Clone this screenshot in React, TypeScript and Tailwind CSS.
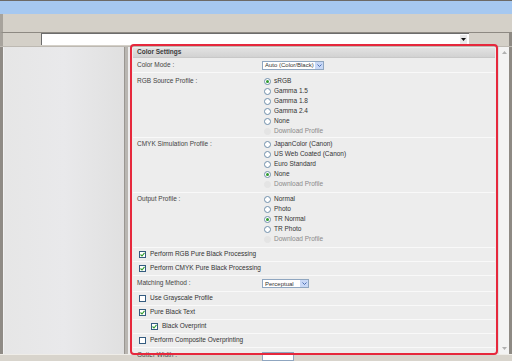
import React from "react";

const font = { fontFamily: '"Liberation Sans", Arial, sans-serif' };

const Radio = ({ label, checked = false, disabled = false }: { label: string; checked?: boolean; disabled?: boolean }) => (
  <div className="flex items-center h-[10px]">
    <span
      className={`w-[7px] h-[7px] rounded-full flex items-center justify-center ${
        disabled ? "bg-[#e4e4e4] border border-[#e4e4e4]" : "bg-white border border-[#6f8fab]"
      }`}
    >
      {checked && <span className="w-[3px] h-[3px] rounded-full bg-[#2f9a2f]" />}
    </span>
    <span className={`ml-[3px] ${disabled ? "text-[#8a8a8a]" : "text-[#333]"}`}>{label}</span>
  </div>
);

const Check = ({ checked }: { checked: boolean }) => (
  <span className="w-[7px] h-[7px] bg-white border border-[#345c80] flex items-center justify-center">
    {checked && (
      <svg width="5" height="5" viewBox="0 0 5 5">
        <path d="M0.5 2.5 L2 4 L4.5 0.8" stroke="#2f9a2f" strokeWidth="1.1" fill="none" />
      </svg>
    )}
  </span>
);

const Select = ({ value, width }: { value: string; width: string }) => (
  <div className={`${width} h-[9px] bg-white border border-[#8fa6c0] flex items-center justify-between overflow-hidden`}>
    <span className="pl-[2px] text-[6px] text-[#333] leading-none whitespace-nowrap">{value}</span>
    <span className="w-[8px] h-[7px] shrink-0 bg-[#c8d8f6] flex items-center justify-center">
      <svg width="5" height="3" viewBox="0 0 5 3">
        <path d="M0.5 0.5 L2.5 2.5 L4.5 0.5" stroke="#4d6fb3" strokeWidth="1" fill="none" />
      </svg>
    </span>
  </div>
);

const RadioRow = ({ label, items, top }: { label: string; items: { t: string; c?: boolean; d?: boolean }[]; top: string }) => (
  <div className={`flex border-b border-[#f9f9f9] ${top}`}>
    <div className="w-[129px] pl-[4px] h-[10px] flex items-center text-[#444]">{label}</div>
    <div className="pl-[2px]">
      {items.map((i) => (
        <Radio key={i.t} label={i.t} checked={i.c} disabled={i.d} />
      ))}
    </div>
  </div>
);

const CheckRow = ({ label, checked, indent = false }: { label: string; checked: boolean; indent?: boolean }) => (
  <div className={`flex items-center h-[14px] border-b border-[#f9f9f9] ${indent ? "pl-[18px]" : "pl-[6px]"}`}>
    <Check checked={checked} />
    <span className="ml-[4px] text-[#333]">{label}</span>
  </div>
);

export default function App() {
  return (
    <div className="relative w-[512px] h-[361px] overflow-hidden bg-[#d4d0c8] text-[6.5px] leading-none" style={font}>
      {/* window title strip */}
      <div className="h-[14px] bg-[#a6c8f0] border-t border-[#6d6a66]" />
      {/* toolbar */}
      <div className="h-[19px] bg-[#d4d0c8] border-l-[3px] border-[#a7a39c] border-b border-b-[#8d8982]" />
      {/* address row */}
      <div className="flex h-[13px] border-l-[3px] border-[#a7a39c]">
        <div className="w-[38px]" />
        <div className="w-[428px] h-[12px] bg-white border-t border-l border-[#6c6c6c] flex justify-end items-center pr-[2px]">
          <span className="w-[7px] h-[9px] bg-[#e8e8e8] flex items-center justify-center">
            <svg width="5" height="3" viewBox="0 0 5 3">
              <path d="M0 0 H5 L2.5 3 Z" fill="#111" />
            </svg>
          </span>
        </div>
        <div className="flex-1 border-r-[3px] border-[#8e8a84]" />
      </div>

      {/* content */}
      <div className="flex h-[308px] border-t border-[#bdb9b2]">
        <div className="w-[3px] bg-[#8f8b85]" />
        <div className="w-[121px] bg-gradient-to-r from-[#e6e6e6] via-[#e9e9eb] to-[#e0e0e0] border-l border-[#f2f2f2]" />
        <div className="w-[4px] bg-[#b9b6b1] border-l border-[#9a9691]" />
        <div className="w-[370px] bg-[#ededed] pl-[5px] pr-[3px]">
          <div className="h-[10px] mt-[1px] bg-gradient-to-b from-[#e2e2e2] to-[#d2d2d2] border-b border-[#c8c8c8] pl-[4px] flex items-center font-bold text-[#3a3a3a]">
            Color Settings
          </div>
          <div className="flex items-center h-[15px] border-b border-[#f9f9f9]">
            <div className="w-[129px] pl-[4px] text-[#444]">Color Mode :</div>
            <Select value="Auto (Color/Black)" width="w-[62px]" />
          </div>
          <RadioRow
            top="pt-[3px] pb-[1px]"
            label="RGB Source Profile :"
            items={[
              { t: "sRGB", c: true },
              { t: "Gamma 1.5" },
              { t: "Gamma 1.8" },
              { t: "Gamma 2.4" },
              { t: "None" },
              { t: "Download Profile", d: true },
            ]}
          />
          <RadioRow
            top="pt-[1px] pb-[3px]"
            label="CMYK Simulation Profile :"
            items={[
              { t: "JapanColor (Canon)" },
              { t: "US Web Coated (Canon)" },
              { t: "Euro Standard" },
              { t: "None", c: true },
              { t: "Download Profile", d: true },
            ]}
          />
          <RadioRow
            top="pt-[1px] pb-[3px]"
            label="Output Profile :"
            items={[
              { t: "Normal" },
              { t: "Photo" },
              { t: "TR Normal", c: true },
              { t: "TR Photo" },
              { t: "Download Profile", d: true },
            ]}
          />
          <CheckRow label="Perform RGB Pure Black Processing" checked />
          <CheckRow label="Perform CMYK Pure Black Processing" checked />
          <div className="flex items-center h-[16px] border-b border-[#f9f9f9]">
            <div className="w-[129px] pl-[4px] text-[#444]">Matching Method :</div>
            <Select value="Perceptual" width="w-[47px]" />
          </div>
          <CheckRow label="Use Grayscale Profile" checked={false} />
          <CheckRow label="Pure Black Text" checked />
          <CheckRow label="Black Overprint" checked indent />
          <CheckRow label="Perform Composite Overprinting" checked={false} />
          <div className="flex items-start h-[14px] pt-[4px]">
            <div className="w-[129px] pl-[4px] text-[#444]">Gutter Width :</div>
            <div className="w-[32px] h-[9px] bg-white border border-[#8fa6c0]" />
          </div>
        </div>
        {/* scrollbar */}
        <div className="w-[11px] bg-[#f3f3f3] border-l border-[#e0e0e0] flex flex-col justify-between items-center py-[4px]">
          <svg width="5" height="3" viewBox="0 0 5 3">
            <path d="M2.5 0 L5 3 H0 Z" fill="#b0b0b0" />
          </svg>
          <svg width="5" height="3" viewBox="0 0 5 3">
            <path d="M0 0 H5 L2.5 3 Z" fill="#b0b0b0" />
          </svg>
        </div>
        <div className="w-[3px] bg-[#8e8a84]" />
      </div>
      {/* bottom strip */}
      <div className="h-[7px] bg-[#d8d4cc] border-t border-[#efede8]" />

      {/* red highlight annotation */}
      <div className="absolute left-[130px] top-[44px] w-[368px] h-[311px] border-2 border-[#e6283c] rounded-[4px] pointer-events-none" />
    </div>
  );
}
